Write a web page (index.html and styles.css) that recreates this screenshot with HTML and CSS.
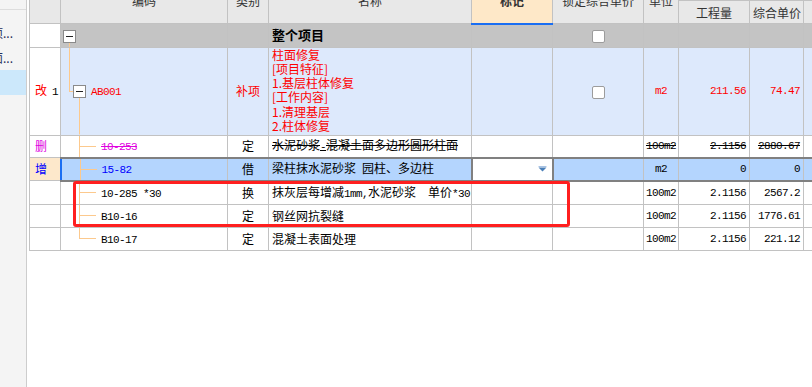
FILE: index.html
```html
<!DOCTYPE html>
<html>
  <head>
    <meta charset="utf-8" />
    <meta name="viewport" content="width=device-width, initial-scale=1.0" />
    <link rel="stylesheet" href="styles.css">
  </head>
  <body>
    <aside class="side">
      <div class="side-top"></div>
      <div class="side-list">
        <div class="side-item"><span>整个项...</span></div>
        <div class="side-item"><span>柱面修复面...</span></div>
        <div class="side-item active"></div>
      </div>
    </aside>

    <main class="sheet">
      <table class="grid">
        <colgroup>
          <col class="w-no" />
          <col class="w-code" />
          <col class="w-kind" />
          <col class="w-name" />
          <col class="w-mark" />
          <col class="w-lock" />
          <col class="w-unit" />
          <col class="w-qty" />
          <col class="w-price" />
          <col class="w-rest" />
        </colgroup>
        <thead>
          <tr class="h1">
            <th rowspan="2"></th>
            <th rowspan="2">编码</th>
            <th rowspan="2">类别</th>
            <th rowspan="2">名称</th>
            <th rowspan="2" class="mark">标记</th>
            <th rowspan="2">锁定综合单价</th>
            <th rowspan="2">单位</th>
            <th colspan="3"></th>
          </tr>
          <tr class="h2">
            <th>工程量</th>
            <th>综合单价</th>
            <th></th>
          </tr>
        </thead>
        <tbody>
          <tr class="total">
            <td class="no"></td>
            <td class="code root"><i class="fold"></i></td>
            <td></td>
            <td class="name bold">整个项目</td>
            <td></td>
            <td class="center"><span class="check"></span></td>
            <td></td>
            <td></td>
            <td></td>
            <td></td>
          </tr>
          <tr class="item">
            <td class="no"><span class="red">改</span><span class="mono row-num">1</span></td>
            <td class="code node"><i class="fold"></i><span class="mono red node-text">AB001</span></td>
            <td class="center red">补项</td>
            <td class="name desc red">柱面修复<br />[项目特征]<br />1.基层柱体修复<br />[工作内容]<br />1.清理基层<br />2.柱体修复</td>
            <td></td>
            <td class="center"><span class="check"></span></td>
            <td class="center mono red">m2</td>
            <td class="num mono red">211.56</td>
            <td class="num mono red">74.47</td>
            <td></td>
          </tr>
          <tr class="del">
            <td class="no pink">删</td>
            <td class="code leaf"><span class="mono pink strike">10-253</span></td>
            <td class="center">定</td>
            <td class="name strike">水泥砂浆<span class="half">-</span>混凝土面多边形圆形柱面</td>
            <td></td>
            <td></td>
            <td class="center mono strike">100m2</td>
            <td class="num mono strike">2.1156</td>
            <td class="num mono strike">2880.67</td>
            <td></td>
          </tr>
          <tr class="add">
            <td class="no blue">增</td>
            <td class="code leaf"><span class="mono blue">15-82</span></td>
            <td class="center">借</td>
            <td class="name">梁柱抹水泥砂浆<span class="half"> </span>园柱、多边柱</td>
            <td class="edit">
              <svg class="drop" width="9" height="6" viewBox="0 0 9 6">
                <path d="M0.5 0.5H8.5" stroke="#a8c3e4" />
                <path d="M0.5 1.5H8.5L4.5 5.5Z" fill="#4a7fb8" />
              </svg>
            </td>
            <td></td>
            <td class="center mono">m2</td>
            <td class="num mono">0</td>
            <td class="num mono">0</td>
            <td></td>
          </tr>
          <tr class="sub tall">
            <td class="no"></td>
            <td class="code leaf"><span class="mono">10-285 *30</span></td>
            <td class="center">换</td>
            <td class="name">抹灰层每增减<span class="half">1mm,</span>水泥砂浆<span class="half">&nbsp;&nbsp;</span>单价<span class="half">*30</span></td>
            <td></td>
            <td></td>
            <td class="center mono">100m2</td>
            <td class="num mono">2.1156</td>
            <td class="num mono">2567.2</td>
            <td></td>
          </tr>
          <tr class="sub">
            <td class="no"></td>
            <td class="code leaf"><span class="mono">B10-16</span></td>
            <td class="center">定</td>
            <td class="name">钢丝网抗裂缝</td>
            <td></td>
            <td></td>
            <td class="center mono">100m2</td>
            <td class="num mono">2.1156</td>
            <td class="num mono">1776.61</td>
            <td></td>
          </tr>
          <tr class="sub">
            <td class="no"></td>
            <td class="code leaf last"><span class="mono">B10-17</span></td>
            <td class="center">定</td>
            <td class="name">混凝土表面处理</td>
            <td></td>
            <td></td>
            <td class="center mono">100m2</td>
            <td class="num mono">2.1156</td>
            <td class="num mono">221.12</td>
            <td></td>
          </tr>
        </tbody>
      </table>

      <!-- 红框标注 -->
      <div class="callout"></div>
    </main>
  </body>
</html>
```

FILE: styles.css
```css
body {
  display: flex;
  margin: 0;
  height: 387px;
  overflow: hidden;
  background: #fff;
  font-family: "Noto Sans CJK SC", sans-serif;
  font-size: 12px;
  color: #000;
}
.side {
  flex: none;
  width: 26px;
  background: #f4f4f4;
  border-right: 1px solid #cdcdcd;
}
.side-top {
  height: 9px;
  border-bottom: 1px solid #dddddd;
}
.side-list {
  padding-top: 10px;
}
.side-item {
  display: flex;
  justify-content: flex-end;
  align-items: center;
  height: 25px;
  padding-right: 13px;
  overflow: hidden;
  white-space: nowrap;
  color: #1f2d5a;
}
.side-item.active {
  background: #cce8fb;
}
.sheet {
  flex: 1;
  padding-left: 2px;
  overflow: hidden;
}
.grid {
  border-collapse: collapse;
  table-layout: fixed;
  width: 814px;
  margin-top: -23px;
}
.w-no { width: 31px; }
.w-code { width: 167px; }
.w-kind { width: 41px; }
.w-name { width: 203px; }
.w-mark { width: 81px; }
.w-lock { width: 91px; }
.w-unit { width: 35px; }
.w-qty { width: 71px; }
.w-price { width: 54px; }
.w-rest { width: 40px; }

th,
td {
  border: 1px solid #c2c2c2;
  padding: 0 3px;
  white-space: nowrap;
  overflow: hidden;
}
th {
  height: 22px;
  background-color: #e8e8e8;
  font-weight: normal;
  color: #333;
}
th.mark {
  background-color: #fee8c8;
  font-weight: bold;
  border-bottom: 2px solid #1a6ef2;
}
td {
  height: 22px;
  line-height: 14px;
}

/* rows */
.total td {
  background-color: #c4c4c4;
}
.item td {
  height: 87px;
  background-color: #dde9fc;
}
.del td {
  height: 21px;
}
.add td {
  height: 21px;
  background-color: #b4d5fe;
}
.add td:not(.no) {
  border-top: 2px solid #808080;
  border-bottom: 2px solid #808080;
}
.sub.tall td {
  height: 22px;
}
td.no {
  background-color: #fff;
  padding-left: 5px;
}
.add td.no {
  background-color: #fde8cb;
}
.row-num {
  margin-left: 5px;
}

/* tree column */
.code {
  --tree: #fcc98d;
  background-repeat: no-repeat;
}
.code.root {
  padding-left: 2px;
  background-image: linear-gradient(var(--tree), var(--tree));
  background-position: 8px 100%;
  background-size: 1px 5px;
}
.code.node {
  padding-left: 12px;
  background-image: linear-gradient(var(--tree), var(--tree)),
    linear-gradient(var(--tree), var(--tree)),
    linear-gradient(var(--tree), var(--tree));
  background-position: 8px 0, 8px 50%, 18px 100%;
  background-size: 1px 50%, 5px 1px, 1px calc(50% - 6px);
}
.code.leaf {
  padding-left: 40px;
  background-image: linear-gradient(var(--tree), var(--tree)),
    linear-gradient(var(--tree), var(--tree));
  background-position: 18px 0, 18px 50%;
  background-size: 1px 100%, 17px 1px;
}
.code.leaf.last {
  background-size: 1px 50%, 17px 1px;
}
.add .code {
  border-left: 2px solid #1a6ef2;
}
.fold {
  display: inline-block;
  width: 13px;
  height: 13px;
  box-sizing: border-box;
  border: 1px solid #8a8a8a;
  background: linear-gradient(#222, #222) no-repeat center / 7px 1px, #fff;
  vertical-align: middle;
}
.node-text {
  margin-left: 5px;
  vertical-align: middle;
}

/* cell content */
.mono,
.half {
  font-family: "Liberation Mono", "Noto Sans CJK SC", monospace;
  font-size: 11px;
  letter-spacing: -0.6px;
}
.name {
  padding-left: 3px;
}
.name.desc {
  vertical-align: top;
  padding-top: 0;
  line-height: 14.3px;
}
.bold {
  font-weight: bold;
  font-size: 13px;
}
.center {
  text-align: center;
  padding: 0;
}
.num {
  text-align: right;
  padding-right: 3px;
}
.strike {
  text-decoration: line-through;
}
.red { color: #ff0000; }
.pink { color: #e000e0; }
.blue { color: #0000ff; }

.check {
  display: inline-block;
  width: 13px;
  height: 13px;
  box-sizing: border-box;
  border: 1px solid #9c9c9c;
  border-radius: 2px;
  background: #fff;
  vertical-align: middle;
}
.add td.edit {
  background-color: #fff;
  border-left: 2px solid #808080;
  border-right: 2px solid #808080;
  text-align: right;
  padding-right: 5px;
}
.drop {
  display: block;
  margin-left: auto;
}

.callout {
  position: absolute;
  left: 73px;
  top: 181px;
  width: 497px;
  height: 46px;
  box-sizing: border-box;
  border: 3px solid #ff1f1f;
  border-radius: 3px;
}
```
